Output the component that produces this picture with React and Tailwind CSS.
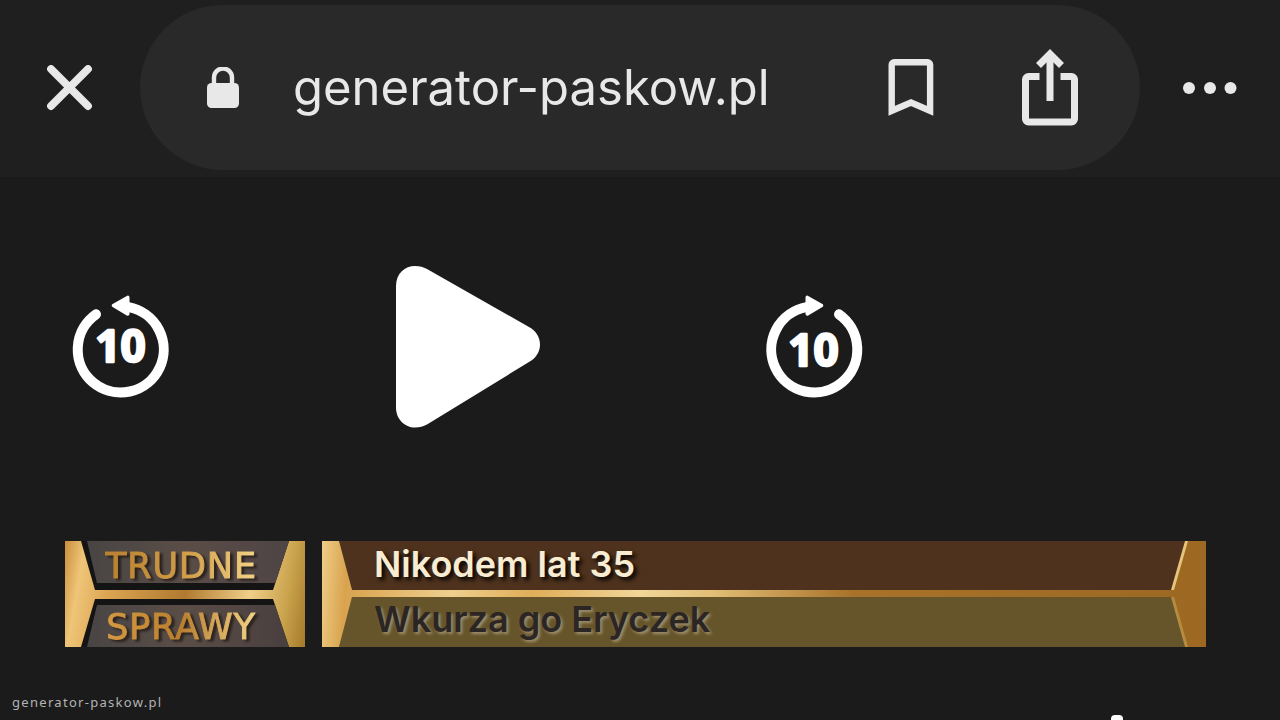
import { useState } from 'react';

const SITE = 'generator-paskow.pl';

const CloseIcon = () => (
  <svg viewBox="0 0 46 46" className="h-[46px] w-[46px]" fill="none" stroke="currentColor" strokeWidth="7.8" strokeLinecap="round">
    <path d="M4 4 41 41M41 4 4 41" />
  </svg>
);

const LockIcon = () => (
  <svg viewBox="0 0 32 41" className="h-[41px] w-8 shrink-0" fill="currentColor">
    <path d="M7 18V10.5a9 9 0 0 1 18 0V18" fill="none" stroke="currentColor" strokeWidth="4.4" />
    <rect x="0" y="16" width="32" height="25" rx="4.5" />
  </svg>
);

const BookmarkIcon = () => (
  <svg viewBox="0 0 46 58" className="h-[58px] w-[46px]" fill="none" stroke="currentColor" strokeWidth="6.4">
    <path d="M3.7 51.8V5.7a2.5 2.5 0 0 1 2.5-2.5h33.4a2.5 2.5 0 0 1 2.5 2.5v46.100L23 43.500Z" />
  </svg>
);

const ShareIcon = () => (
  <svg viewBox="0 0 58 78" className="h-[78px] w-[58px]" fill="none" stroke="currentColor" strokeWidth="7">
    <path d="M18.5 27.5H7.5a3 3 0 0 0-3 3V70a3 3 0 0 0 3 3h43a3 3 0 0 0 3-3V30.5a3 3 0 0 0-3-3H39.5" />
    <path d="M29 52V6" />
    <path d="M17.5 16.5 29 5 40.5 16.5" />
  </svg>
);

const DotsIcon = () => (
  <svg viewBox="0 0 54 12" className="h-3 w-[54px]" fill="currentColor">
    <circle cx="6" cy="6" r="6" />
    <circle cx="27" cy="6" r="6" />
    <circle cx="47.5" cy="6" r="6" />
  </svg>
);

const BackTenIcon = () => (
  <svg viewBox="0 0 97 104" className="h-[104px] w-[97px]" fill="white" stroke="white">
    <path d="M24 19.300A43 43 0 1 0 56.500 12.200" fill="none" strokeWidth="10" strokeLinecap="round" />
    <path d="M41.500 10.500 55.700 2.500V19Z" strokeWidth="3.600" strokeLinejoin="round" />
    <text x="48.5" y="67" textAnchor="middle" strokeWidth="2.4" strokeLinejoin="round" className="font-['Open_Sans','Noto_Sans',sans-serif] text-[44px] font-bold">10</text>
  </svg>
);

const ForwardTenIcon = () => (
  <svg viewBox="0 0 97 104" className="h-[104px] w-[97px]" fill="white" stroke="white">
    <path d="M73 19.300A43 43 0 1 1 40.500 12.200" fill="none" strokeWidth="10" strokeLinecap="round" />
    <path d="M55.500 10.500 41.300 2.500V19Z" strokeWidth="3.600" strokeLinejoin="round" />
    <text x="47.5" y="71" textAnchor="middle" strokeWidth="2.4" strokeLinejoin="round" className="font-['Open_Sans','Noto_Sans',sans-serif] text-[44px] font-bold">10</text>
  </svg>
);

const PlayIcon = () => (
  <svg viewBox="0 0 144 162" className="h-[162px] w-36" fill="white">
    <path d="M0 20C0 7 9 0 19 0c5 0 8 1 12 3l102 58c7 4 11 10 11 17.500s-4 13.500-11 17.500L31 158.500c-4 2-7 3-12 3-10 0-19-8-19-20Z" />
  </svg>
);

const PauseIcon = () => (
  <svg viewBox="0 0 144 162" className="h-[162px] w-36" fill="white">
    <rect x="14" y="0" width="42" height="162" rx="12" />
    <rect x="88" y="0" width="42" height="162" rx="12" />
  </svg>
);

const BrowserBar = () => (
  <header className="flex h-[177px] items-center bg-[#1f1f1f] pt-[5px] pb-[7px] text-[#e8e8e8]">
    <div className="flex w-[140px] shrink-0 justify-center">
      <button type="button" aria-label="Zamknij">
        <CloseIcon />
      </button>
    </div>
    <div className="flex h-full min-w-0 flex-1 items-center rounded-full bg-[#292929] pr-[61px] pl-[67px]">
      <LockIcon />
      <span className="ml-[54px] flex-1 truncate text-[49px] leading-[64px]">{SITE}</span>
      <button type="button" aria-label="Dodaj zakładkę" className="mr-[87px]">
        <BookmarkIcon />
      </button>
      <button type="button" aria-label="Udostępnij">
        <ShareIcon />
      </button>
    </div>
    <div className="flex w-[140px] shrink-0 justify-center">
      <button type="button" aria-label="Więcej">
        <DotsIcon />
      </button>
    </div>
  </header>
);

const PlayerControls = () => {
  const [playing, setPlaying] = useState(false);

  return (
    <div className="flex h-[162px] items-center justify-between pr-[417px] pl-[72px]">
      <button type="button" aria-label="Cofnij 10 sekund">
        <BackTenIcon />
      </button>
      <button type="button" aria-label={playing ? 'Pauza' : 'Odtwórz'} onClick={() => setPlaying(!playing)}>
        {playing ? <PauseIcon /> : <PlayIcon />}
      </button>
      <button type="button" aria-label="Przewiń 10 sekund">
        <ForwardTenIcon />
      </button>
    </div>
  );
};

const ShowLogo = () => (
  <div className="flex w-60 shrink-0 flex-col justify-between bg-[linear-gradient(100deg,#c98f3c_0%,#efc578_8%,#dba552_20%,#b07a30_50%,#f0cf8a_75%,#c9a24c_90%,#a5792a_100%)] font-['DejaVu_Sans',sans-serif] text-[35px] tracking-wide">
    <div className="bg-[#141414] [clip-path:polygon(16px_0,224px_0,208px_100%,30px_100%)]">
      <div className="mb-[7px] h-[42px] bg-linear-to-r from-[#454343] via-[#5a4d47] to-[#4d4345] pr-2 text-center leading-[50px] [clip-path:polygon(22px_0,100%_0,100%_100%,32px_100%)]">
        <span className="bg-linear-to-r from-[#b9812f] via-[#cf9a45] to-[#f3d486] bg-clip-text text-transparent drop-shadow-[3px_2px_1px_#2a211d] [-webkit-text-stroke:1px_transparent]">TRUDNE</span>
      </div>
    </div>
    <div className="bg-[#141414] [clip-path:polygon(30px_0,208px_0,224px_100%,16px_100%)]">
      <div className="mt-[6px] h-[42px] bg-linear-to-r from-[#454343] via-[#5a4d47] to-[#463d3d] pr-2 text-center leading-[44px] [clip-path:polygon(32px_0,100%_0,100%_100%,22px_100%)]">
        <span className="bg-linear-to-r from-[#d59a42] via-[#b97f2e] to-[#f3d486] bg-clip-text text-transparent drop-shadow-[3px_2px_1px_#2a211d] [-webkit-text-stroke:1px_transparent]">SPRAWY</span>
      </div>
    </div>
  </div>
);

const CaptionBar = ({ title, subtitle }) => (
  <div className="flex min-w-0 flex-1 flex-col justify-between bg-[linear-gradient(94deg,#efcd88_0%,#d9a34e_3%,#efcf8e_15%,#dfae58_24%,#f0d69a_36%,#e3bf77_44%,#a8722a_60%,#9c6822_100%)] text-[36px] font-semibold">
    <div className="mr-[18px] ml-[17px] bg-[#e6c47c] [clip-path:polygon(0_0,100%_0,calc(100%-14px)_100%,13px_100%)]">
      <h1 className="mr-[3px] h-[49px] truncate bg-[#4e321d] pl-[35px] leading-[46px] text-[#f8ecd2] [clip-path:polygon(0_0,100%_0,calc(100%-14px)_100%,0_100%)] [text-shadow:3px_3px_4px_#000]">
        {title}
      </h1>
    </div>
    <div className="mr-[18px] ml-[17px] bg-[#b48c42] [clip-path:polygon(13px_0,calc(100%-14px)_0,100%_100%,0_100%)]">
      <p className="mr-[3px] h-[50px] truncate bg-[#66552a] pl-[35px] leading-[44px] text-[#2b2623] [clip-path:polygon(0_0,calc(100%-14px)_0,100%_100%,0_100%)] [text-shadow:2px_2px_3px_#a09070]">
        {subtitle}
      </p>
    </div>
  </div>
);

export default function App() {
  return (
    <div className="flex min-h-screen flex-col bg-[#1b1b1b] font-['Inter',sans-serif]">
      <BrowserBar />
      <main className="flex flex-1 flex-col gap-[113px] pt-[89px]">
        <PlayerControls />
        <section className="flex h-[106px] gap-[17px] pr-[74px] pl-[65px]">
          <ShowLogo />
          <CaptionBar title="Nikodem lat 35" subtitle="Wkurza go Eryczek" />
        </section>
      </main>
      <footer className="flex h-[34px] items-end justify-between pr-[157px] pl-3">
        <a href="#generator" className="pb-2 font-['Noto_Sans',sans-serif] text-[13px] leading-5 tracking-widest text-[#b4b4b4]">
          {SITE}
        </a>
        <div className="h-[5px] w-3 rounded-t-sm bg-white" />
      </footer>
    </div>
  );
}
